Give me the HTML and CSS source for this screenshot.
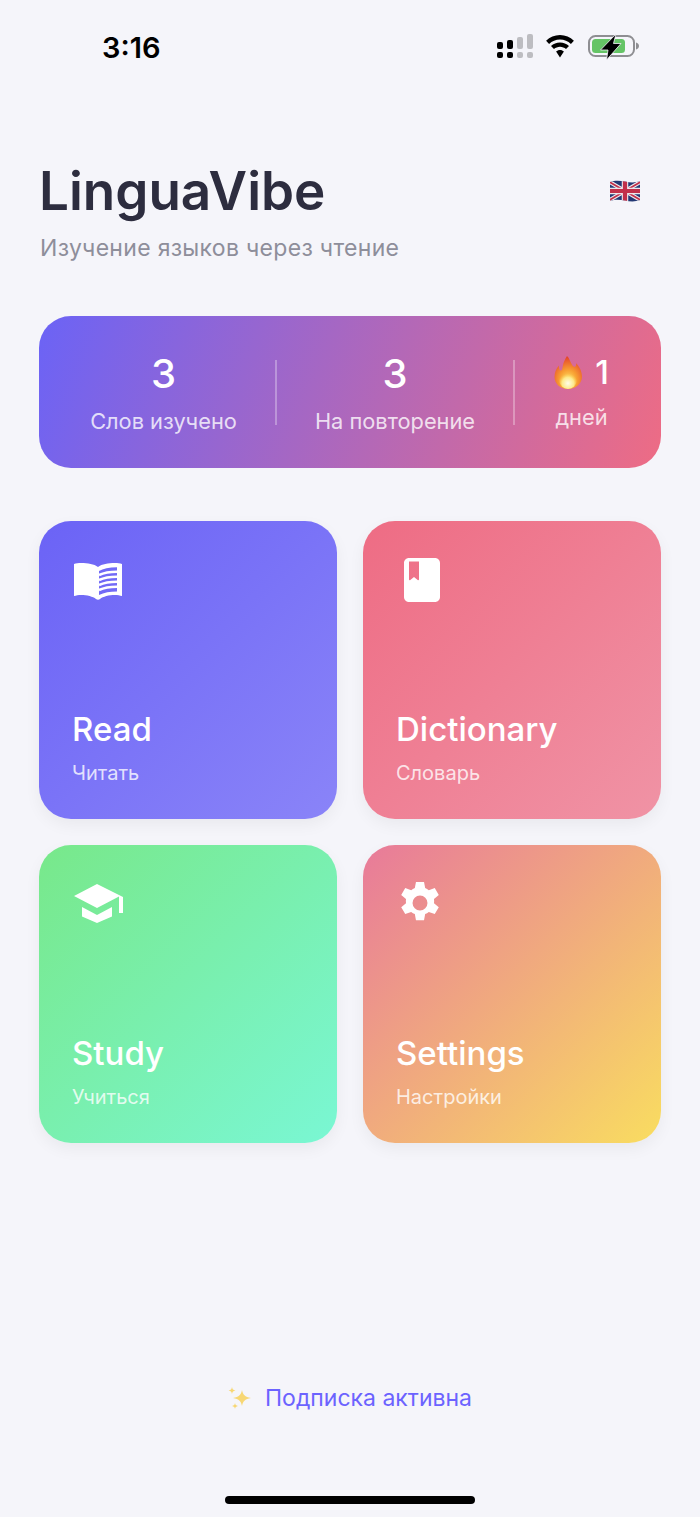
FILE: index.html
```html
<!DOCTYPE html>
<html lang="ru">
<head>
<meta charset="utf-8">
<title>LinguaVibe</title>
<link rel="stylesheet" href="styles.css">
</head>
<body>
<main class="screen">
  <div class="statusbar">
    <span class="time">3:16</span>
    <div class="status-icons">
      <svg class="ic-signal" width="36" height="24" viewBox="0 0 36 24"><g fill="#000"><rect x="0" y="8" width="6" height="7" rx="2"/><rect x="10" y="6" width="6" height="9" rx="2"/><rect x="0" y="18" width="6" height="6" rx="2"/><rect x="10" y="18" width="6" height="6" rx="2"/></g><g fill="#bdbdc1"><rect x="20" y="3" width="6" height="12" rx="2"/><rect x="30" y="0" width="6" height="15" rx="2"/><rect x="20" y="18" width="6" height="6" rx="2"/><rect x="30" y="18" width="6" height="6" rx="2"/></g></svg>
      <svg class="ic-wifi" width="32" height="23" viewBox="0 0 32 23"><path fill="#000" d="M16 4.600c4.200 0 8 1.600 10.900 4.300l3-3.100C26.200 2.200 21.400 0 16 0S5.800 2.200 2.100 5.800l3 3.100C8 6.200 11.800 4.600 16 4.600zM16 11.800c2.300 0 4.400.9 6 2.300l3-3.100c-2.400-2.200-5.500-3.600-9-3.600s-6.600 1.400-9 3.600l3 3.100c1.600-1.400 3.700-2.300 6-2.300zM16 15c-1.500 0-2.900.6-3.900 1.500L16 22.500l3.900-6c-1-.9-2.400-1.500-3.900-1.500z"/></svg>
      <svg class="ic-batt" width="52" height="28" viewBox="0 0 52 28"><rect x="1" y="4" width="45" height="20" rx="6.500" fill="none" stroke="#8e8e92" stroke-width="2"/><path d="M48 10.500c1.700.4 3 1.700 3 3.500s-1.300 3.100-3 3.500z" fill="#8e8e92"/><rect x="4" y="7" width="33" height="14" rx="3.500" fill="#65c466"/><path d="M28 2L12.500 18h7.500L18.500 28 33 11.500h-7.500z" fill="#000" stroke="#f5f5fa" stroke-width=".8"/></svg>
    </div>
  </div>

  <header class="header">
    <div class="brand">
      <h1 class="title">LinguaVibe</h1>
      <p class="subtitle">Изучение языков через чтение</p>
    </div>
    <svg class="flag" width="34" height="26" viewBox="0 0 34 26">
      <defs><clipPath id="fl"><path d="M2 4c5-2 10-1.500 15-.5s10 1.500 15-.5v19c-5 2-10 1.500-15 .5s-10-1.500-15 .5z"/></clipPath></defs>
      <g clip-path="url(#fl)">
        <rect width="34" height="26" fill="#233874"/>
        <path d="M0 3l34 20M34 3L0 23" stroke="#ece6ea" stroke-width="4"/>
        <path d="M0 3l34 20M34 3L0 23" stroke="#c2304a" stroke-width="1.800"/>
        <path d="M17 0v26M0 13h34" stroke="#ece6ea" stroke-width="6.500"/>
        <path d="M17 0v26M0 13h34" stroke="#c2304a" stroke-width="4.200"/>
      </g>
    </svg>
  </header>

  <section class="stats">
    <div class="stat stat-words">
      <span class="stat-num">3</span>
      <span class="stat-label">Слов изучено</span>
    </div>
    <div class="stat stat-review">
      <span class="stat-num">3</span>
      <span class="stat-label">На повторение</span>
    </div>
    <div class="stat stat-days">
      <span class="stat-num streak">
        <svg class="fire" width="28" height="33" viewBox="0 0 28 33">
          <defs>
            <radialGradient id="fo" cx="50%" cy="74%" r="70%"><stop offset="0" stop-color="#fde26a"/><stop offset=".45" stop-color="#f8a032"/><stop offset="1" stop-color="#e5472b"/></radialGradient>
            <radialGradient id="fi" cx="50%" cy="68%" r="55%"><stop offset="0" stop-color="#fffde8"/><stop offset=".6" stop-color="#fde98a"/><stop offset="1" stop-color="#fbc94a" stop-opacity="0"/></radialGradient>
          </defs>
          <path fill="url(#fo)" d="M13 0c2.500 2 3 6 5.500 9.500 1.200 1.600 2.500 1.800 3.200.5.400-.8.500-1.700.5-2.800 3 3.200 5.800 8 5.800 13.300C28 28 21.500 33 14 33S.5 28 .5 21c0-4.500 1.500-8.500 4.500-11.500-.2 2.300.2 4.500 1.500 5 1.500.5 1.800-1.500 2.200-4C9.200 6.500 11.200 3 13 0z"/>
          <ellipse fill="url(#fi)" cx="14" cy="24" rx="9" ry="9"/>
        </svg>
        <span>1</span>
      </span>
      <span class="stat-label">дней</span>
    </div>
  </section>

  <section class="grid">
    <a class="tile tile-read">
      <svg class="tile-icon icon-read" width="48" height="38" viewBox="0 0 48 38"><path fill="#fff" fill-rule="evenodd" d="M24 5C20 2 14 1 7 1 4.500 1 2 1.300 0 2v32c2-.5 4.500-1 7-1 6 0 12 1.500 15 4 1 1 3 1 4 0 3-2.500 9-4 15-4 2.500 0 5 .5 7 1V2c-2-.7-4.500-1-7-1-7 0-13 1-17 4zM25 9c4-2.500 10-3.800 18-3.800V29.500c-7 0-13 1-18 3.500z"/><path fill="none" stroke="#fff" stroke-width="2.500" d="M25 13c5-2.300 11-3.300 18-3.300M25 18c5-2.300 11-3.300 18-3.300M25 23c5-2.300 11-3.300 18-3.300M25 28c5-2.300 11-3.300 18-3.300"/></svg>
      <span class="tile-name">Read</span>
      <span class="tile-sub">Читать</span>
    </a>
    <a class="tile tile-dict">
      <svg class="tile-icon icon-dict" width="36" height="44" viewBox="0 0 36 44"><path fill="#fff" fill-rule="evenodd" d="M5 0h26c2.800 0 5 2.200 5 5v34c0 2.800-2.200 5-5 5H5c-2.800 0-5-2.200-5-5V5c0-2.800 2.200-5 5-5zm0 3.500v18c0 .7.800 1 1.300.6l3.700-3.100 3.700 3.100c.5.400 1.300.1 1.300-.6v-18z"/></svg>
      <span class="tile-name">Dictionary</span>
      <span class="tile-sub">Словарь</span>
    </a>
    <a class="tile tile-study">
      <svg class="tile-icon icon-study" width="49" height="39" viewBox="0 0 49 39"><path fill="#fff" d="M23 0L0 12l23 12 22-11.500V29h4V13zM8 23v9.500L23 39l15-6.500V23l-15 8z"/></svg>
      <span class="tile-name">Study</span>
      <span class="tile-sub">Учиться</span>
    </a>
    <a class="tile tile-settings">
      <svg class="tile-icon icon-settings" width="46" height="46" viewBox="0 0 24 24"><path fill="#fff" fill-rule="evenodd" d="M14.100 1h-4.200l-.6 3.200c-.7.300-1.300.6-1.900 1.100L4.300 4.200 2.200 7.800l2.500 2.100c-.1.700-.1 1.500 0 2.200l-2.500 2.100 2.100 3.600 3.100-1.100c.6.500 1.200.8 1.900 1.100l.6 3.200h4.200l.6-3.200c.7-.3 1.300-.6 1.900-1.100l3.100 1.100 2.100-3.600-2.500-2.100c.1-.7.100-1.500 0-2.200l2.500-2.100-2.100-3.600-3.100 1.100c-.6-.5-1.200-.8-1.900-1.100zM12 8.100a3.900 3.900 0 1 1 0 7.800 3.900 3.900 0 0 1 0-7.800z"/></svg>
      <span class="tile-name">Settings</span>
      <span class="tile-sub">Настройки</span>
    </a>
  </section>

  <div class="subscription">
    <svg class="sparkles" width="24" height="24" viewBox="0 0 24 24"><g fill="#f7d774"><path d="M14 4c.8 4.600 2.800 7 9 8-6.200 1-8.200 3.400-9 8-.8-4.600-2.800-7-9-8 6.200-1 8.200-3.400 9-8z"/><path d="M4 1c.4 2.200 1.200 3.100 3.400 3.500C5.200 4.900 4.400 5.800 4 8c-.4-2.200-1.200-3.100-3.400-3.500C2.800 4.100 3.600 3.200 4 1z"/><path d="M7 17c.3 1.800 1 2.600 3 3-2 .4-2.700 1.200-3 3-.3-1.800-1-2.600-3-3 2-.4 2.700-1.200 3-3z"/></g></svg>
    <span class="sub-text">Подписка активна</span>
  </div>

  <div class="home-indicator"></div>
</main>
</body>
</html>
```
FILE: styles.css
```css
* { box-sizing: border-box; }
html, body { margin: 0; padding: 0; }
body {
  background: #f5f5fa;
  font-family: Inter, "Noto Sans", sans-serif;
  color: #2d2d3f;
}
.screen {
  width: 700px;
  height: 1517px;
  display: flex;
  flex-direction: column;
  background: #f5f5fa;
}
.statusbar {
  height: 94px;
  padding: 0 60px 0 102px;
  display: flex;
  justify-content: space-between;
  align-items: flex-start;
}
.time {
  margin-top: 31px;
  font-size: 29px;
  line-height: 34px;
  font-weight: 600;
  color: #000;
}
.status-icons {
  margin-top: 32px;
  display: flex;
  align-items: center;
  gap: 11px;
}
.ic-batt { margin-left: 1px; }
.header {
  padding: 66px 58px 0 39px;
  display: flex;
  justify-content: space-between;
  align-items: flex-start;
}
.title {
  margin: 0;
  font-size: 53px;
  line-height: 62px;
  font-weight: 600;
  color: #2d2d3f;
}
.subtitle {
  margin: 12px 0 0 1px;
  font-size: 23px;
  line-height: 28px;
  letter-spacing: .3px;
  color: #8e8e9a;
}
.flag { margin-top: 18px; }
.stats {
  margin: 54px 39px 0;
  padding: 0 13px;
  height: 152px;
  border-radius: 32px;
  background: linear-gradient(110deg, #6b63f6 0%, #ee6c84 100%);
  display: flex;
  align-items: center;
  color: #fff;
}
.stat {
  display: flex;
  flex-direction: column;
  align-items: center;
  height: 65px;
  justify-content: center;
}
.stat-words { width: 225px; border-right: 2px solid rgba(255,255,255,.3); }
.stat-review { width: 238px; border-right: 2px solid rgba(255,255,255,.3); }
.stat-days { width: 133px; }
.stat-num {
  font-size: 40px;
  line-height: 47px;
  font-weight: 500;
}
.stat-label {
  margin-top: 11px;
  font-size: 21.8px;
  line-height: 26px;
  color: rgba(255,255,255,.8);
}
.streak {
  display: flex;
  align-items: center;
  gap: 13px;
  font-size: 33px;
}
.stat-days .stat-label {
  margin-top: 8px;
  margin-bottom: 5px;
}
.grid {
  margin: 53px 39px 0;
  display: grid;
  grid-template-columns: 298px 298px;
  grid-auto-rows: 298px;
  column-gap: 26px;
  row-gap: 26px;
}
.tile {
  border-radius: 32px;
  padding: 36px 33px 35px;
  display: flex;
  flex-direction: column;
  color: #fff;
  box-shadow: 0 6px 16px rgba(0,0,0,.05);
}
.tile-read { background: linear-gradient(135deg, #6b63f6, #8a84f8); }
.tile-dict { background: linear-gradient(135deg, #ee6c84, #f093a5); }
.tile-study { background: linear-gradient(135deg, #78e88a, #7af7d4); }
.tile-settings { background: linear-gradient(135deg, #e87a9a, #f9dd60); }
.tile-icon { flex: none; }
.icon-read { margin: 5px 0 0 2px; }
.icon-dict { margin: 1px 0 0 8px; }
.icon-study { margin: 3px 0 0 2px; }
.icon-settings { margin: -1px 0 0 1px; }
.tile-name {
  margin-top: auto;
  font-size: 33px;
  line-height: 40px;
  font-weight: 500;
}
.tile-sub {
  margin-top: 13px;
  font-size: 20px;
  line-height: 22px;
  color: rgba(255,255,255,.8);
}
.subscription {
  margin-top: auto;
  display: flex;
  justify-content: center;
  align-items: center;
  gap: 13px;
  height: 30px;
}
.sub-text {
  font-size: 23px;
  line-height: 30px;
  color: #6c63ff;
}
.home-indicator {
  margin: 83px auto 13px;
  width: 250px;
  height: 8px;
  border-radius: 4px;
  background: #000;
}
```
